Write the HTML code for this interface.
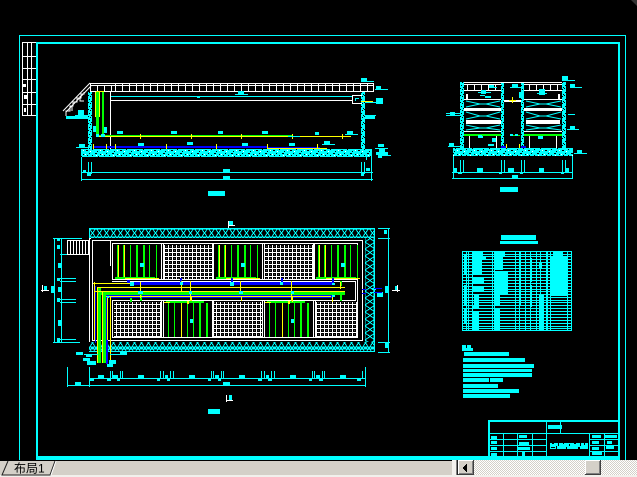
<!DOCTYPE html>
<html><head><meta charset="utf-8"><style>
html,body{margin:0;padding:0;background:#000;width:637px;height:477px;overflow:hidden}
svg{display:block;position:absolute;left:0;top:0;overflow:hidden}
text{font-family:"Liberation Sans","Noto Sans CJK SC","WenQuanYi Zen Hei",sans-serif}
</style></head><body>
<svg width="637" height="477" viewBox="0 0 637 477" xmlns="http://www.w3.org/2000/svg" shape-rendering="crispEdges">
<defs>
<pattern id="con" width="17" height="8" patternUnits="userSpaceOnUse" patternTransform="translate(0 149)">
<rect width="17" height="8" fill="#0ff"/>
<path d="M1 1h2v1h-2zM7 0h1v1h-1zM12 2h1v1h-1zM4 4h1v1h-1zM10 4h2v1h-2zM15 5h1v1h-1zM2 6h1v1h-1zM7 6h1v1h-1zM13 7h1v1h-1z" fill="#000"/>
<path d="M5 2h1v1h-1zM15 1h1v1h-1zM0 5h1v1h-1zM11 6h1v1h-1z" fill="#fff"/>
</pattern>
<pattern id="wall" width="4" height="7" patternUnits="userSpaceOnUse">
<rect width="4" height="7" fill="#0ff"/>
<path d="M1 1h1v1h-1zM3 3h1v1h-1zM0 4h1v1h-1zM2 5h1v1h-1z" fill="#000"/>
</pattern>
<pattern id="hatch" width="7" height="10" patternUnits="userSpaceOnUse" patternTransform="translate(89 228)">
<path d="M0 0L3.5 5L0 10M7 0L3.5 5L7 10M2 0L5 0M2 10L5 10M0 1L7 1M1 9H6" fill="none" stroke="#0ff" stroke-width="1"/>
</pattern>
<pattern id="hatchv" width="10" height="7" patternUnits="userSpaceOnUse" patternTransform="translate(365 228)">
<path d="M0 0L5 3.5L10 0M0 7L5 3.5L10 7M0 0V7M9 0V7" fill="none" stroke="#0ff" stroke-width="1"/>
</pattern>
<pattern id="grid" width="4" height="4" patternUnits="userSpaceOnUse">
<rect width="4" height="4" fill="#000"/>
<path d="M0 0h4v1h-4zM0 0h1v4h-1z" fill="#fff"/>
<path d="M2 2h1v1h-1z" fill="#444"/>
</pattern>
<pattern id="dither" width="2" height="2" patternUnits="userSpaceOnUse">
<rect width="2" height="2" fill="#fff"/>
<path d="M0 0h1v1h-1zM1 1h1v1h-1z" fill="#d4d0c8"/>
</pattern>
<pattern id="rail" width="7" height="9" patternUnits="userSpaceOnUse" patternTransform="translate(115 83)">
<path d="M0 2h7v1h-7zM0 0h1v9h-1zM0 8h7v1h-7z" fill="#fff"/>
</pattern>
<g id="rt">
<path d="M4 2h1v34h-1zM10 2h1v34h-1zM17 2h1v34h-1zM23 2h2v34h-2zM30 2h2v34h-2zM36 2h1v34h-1zM43 2h1v34h-1z" fill="#0f0"/>
<path d="M5 2h1v34h-1zM11 2h1v34h-1z" fill="#ff0"/>
<path d="M2 34h40v2h-40z" fill="#0f0"/>
<path d="M12 35h34v1h-34z" fill="#ff0"/>
<path d="M27 20h4v4h-4z" fill="#0ff"/>
</g>
<g id="rb">
<path d="M5 2h1v34h-1zM11 2h1v34h-1zM18 2h1v34h-1zM24 2h1v34h-1zM30 2h1v34h-1zM36 2h2v34h-2zM43 2h2v34h-2z" fill="#0f0"/>
<path d="M18 2h1v34h-1z" fill="#ff0"/>
<path d="M3 0h38v2h-38z" fill="#0f0"/>
<path d="M1 1h6v1h-6zM24 0h2v3h-2z" fill="#ff0"/>
<path d="M27 18h3v4h-3z" fill="#0ff"/>
</g>
</defs>

<!-- drawing frames -->
<path d="M19 35h607v1h-607zM19 35h1v425h-1zM625 35h1v425h-1z" fill="#0ff"/>
<path d="M36 42h584v2h-582v412h580v-412h2v416h-584z" fill="#0ff"/>

<!-- revision strip -->
<path d="M22 42h14v1h-14zM22 56h14v1h-14zM22 68h14v1h-14zM22 79h14v1h-14zM22 92h14v1h-14zM22 104h14v1h-14zM22 115h14v1h-14zM22 42h1v74h-1zM27 42h1v74h-1zM31 42h1v74h-1z" fill="#fff"/>
<path d="M23 84h3v3h-3zM24 95h3v4h-3zM24 108h2v4h-2z" fill="#fff"/>

<!-- SECTION 1 -->
<rect x="115" y="83" width="259" height="9" fill="url(#rail)"/>
<path d="M90 83h284v1h-284zM90 85h284v1h-284zM90 91h284v1h-284zM373 83h1v9h-1zM90 83h1v9h-1zM97 85h1v7h-1zM104 85h1v7h-1zM111 85h1v7h-1z" fill="#fff"/>
<g fill="none" stroke="#fff" stroke-width="1" shape-rendering="auto">
<path d="M90 83L63 111M91 86L66 112"/>
<path d="M66 116V111H70V106H73V102H77V98H81V94H84V92M72 106V111M80 96V101H84"/>
</g>
<rect x="88" y="92" width="4" height="58" fill="url(#wall)"/>
<rect x="361" y="92" width="4" height="58" fill="url(#wall)"/>
<path d="M110 92h1v58h-1zM110 100h242v1h-242zM352 95h10v1h-10zM352 95h1v9h-1zM352 103h10v1h-10z" fill="#fff"/>
<path d="M111 96h241v1h-241zM197 96h3v2h-3zM355 98h4v1h-4zM355 98h1v3h-1z" fill="#0ff"/>
<path d="M365 101h8v2h-8z" fill="#00f"/><path d="M361 101h12v1h-12z" fill="#ff0"/>
<path d="M96 92h3v45h-3zM102 92h2v45h-2z" fill="#0f0"/>
<path d="M95 92h1v25h-1zM99 92h1v25h-1zM96 91h8v1h-8z" fill="#ff0"/>
<path d="M97 135h196v1h-196z" fill="#0f0"/>
<path d="M97 136h147v1h-147zM244 136h107v1h-107z" fill="#ff0"/>
<path d="M94 146h174v2h-174zM268 147h52v1h-52z" fill="#00f"/>
<path d="M267 148h60v1h-60zM93 144h1v6h-1zM106 144h1v6h-1zM115 144h1v6h-1zM166 144h1v6h-1zM216 144h1v6h-1zM267 144h1v6h-1zM317 144h1v6h-1zM140 134h1v5h-1zM191 134h1v5h-1zM241 134h1v5h-1zM292 134h1v5h-1zM342 134h1v5h-1z" fill="#ff0"/>
<rect x="81" y="149" width="291" height="8" fill="url(#con)"/>
<path d="M366 157h1v3h-1zM81 157h1v24h-1zM371 157h1v24h-1zM81 172h292v1h-292zM81 179h292v1h-292zM88 162h1v12h-1zM91 162h1v12h-1zM361 162h1v12h-1zM364 162h1v12h-1zM208 191h17v5h-17z" fill="#0ff"/>
<path fill="#0ff" d="M117 131h6v3h-6zM171 131h6v3h-6zM218 131h5v3h-5zM262 131h6v3h-6zM315 132h4v3h-4zM347 131h6v4h-6zM345 134h13v1h-13zM138 143h6v3h-6zM187 142h6v3h-6zM242 143h6v3h-6zM289 143h6v3h-6zM324 141h6v4h-6zM322 144h13v1h-13zM79 144h6v4h-6zM76 147h12v1h-12zM238 91h6v4h-6zM235 94h13v1h-13zM361 78h6v4h-6zM361 81h13v1h-13zM376 86h5v4h-5zM375 89h13v1h-13zM376 98h7v6h-7zM365 102h17v1h-17zM78 110h6v6h-6zM75 115h13v1h-13zM365 115h11v1h-11zM66 116h22v3h-22zM365 116h10v3h-10zM378 144h6v3h-6zM379 149h6v3h-6zM376 152h12v3h-12zM375 148h13v1h-13zM380 155h11v1h-11zM378 155h4v3h-4zM223 169h7v3h-7zM223 176h7v3h-7zM83 170h3v3h-3zM87 173h4v3h-4zM366 168h4v3h-4zM361 173h3v3h-3zM93 126h3v6h-3zM104 127h3v6h-3zM96 134h3v3h-3zM101 134h4v3h-4zM288 136h12v1h-12z"/>

<!-- SECTION 2 -->
<rect x="460" y="82" width="4" height="68" fill="url(#wall)"/>
<rect x="501" y="82" width="3" height="66" fill="url(#wall)"/>
<rect x="521" y="82" width="3" height="66" fill="url(#wall)"/>
<rect x="562" y="82" width="4" height="68" fill="url(#wall)"/>
<path d="M464 82h98v1h-98zM464 84h37v1h-37zM524 84h38v1h-38zM464 90h37v1h-37zM524 90h38v1h-38zM467 84h1v6h-1zM474 84h1v6h-1zM481 84h1v6h-1zM488 84h1v6h-1zM495 84h1v6h-1zM529 84h1v6h-1zM536 84h1v6h-1zM543 84h1v6h-1zM550 84h1v6h-1zM557 84h1v6h-1zM504 100h17v2h-17zM464 99h37v1h-37zM524 99h38v1h-38zM466 94h2v5h-2zM558 94h2v5h-2zM464 108h37v3h-37zM524 108h38v3h-38zM466 120h35v4h-35zM526 120h34v4h-34zM464 131h37v1h-37zM524 131h38v1h-38zM469 135h1v14h-1zM496 135h1v14h-1zM529 135h1v14h-1zM556 135h1v14h-1z" fill="#fff"/>
<g fill="none" stroke="#0ff" stroke-width="1" shape-rendering="auto">
<path d="M466 101L480 104H486L500 101M466 107L480 104M486 104L500 107"/>
<path d="M466 112L480 116H486L500 112M466 119L480 116M486 116L500 119"/>
<path d="M466 125L480 128H486L500 125M466 130L480 128M486 128L500 130"/>
<path d="M526 101L540 104H546L561 101M526 107L540 104M546 104L561 107"/>
<path d="M526 112L540 116H546L561 112M526 119L540 116M546 116L561 119"/>
<path d="M526 125L540 128H546L561 125M526 130L540 128M546 128L561 130"/>
</g>
<path d="M464 134h37v2h-37zM524 134h38v2h-38zM511 135h9v1h-9z" fill="#0f0"/>
<path d="M512 97h1v6h-1zM509 100h7v1h-7zM506 144h1v6h-1zM519 144h1v6h-1z" fill="#ff0"/>
<path d="M501 146h5v3h-5zM521 146h5v3h-5z" fill="#00f"/>
<rect x="453" y="148" width="120" height="8" fill="url(#con)"/>
<path fill="#0ff" d="M453 156h1v23h-1zM572 156h1v23h-1zM452 172h121v1h-121zM452 178h121v1h-121zM460 160h1v12h-1zM463 160h1v12h-1zM501 160h1v12h-1zM504 160h1v12h-1zM521 160h1v12h-1zM524 160h1v12h-1zM562 160h1v12h-1zM565 160h1v12h-1zM477 168h6v4h-6zM508 168h6v4h-6zM539 168h5v4h-5zM454 168h3v4h-3zM566 168h3v4h-3zM458 172h4v2h-4zM499 172h3v2h-3zM520 172h3v2h-3zM561 172h3v2h-3zM512 175h6v3h-6zM500 187h18v5h-18zM489 85h5v3h-5zM491 87h6v1h-6zM481 90h5v4h-5zM478 92h13v1h-13zM485 96h6v2h-6zM480 95h5v1h-5zM512 84h6v3h-6zM510 87h14v1h-14zM519 92h5v6h-5zM539 89h6v6h-6zM537 93h10v1h-10zM478 135h4v2h-4zM492 138h4v4h-4zM478 136h5v2h-5zM510 134h3v2h-3zM515 134h3v2h-3zM538 136h5v3h-5zM488 144h6v2h-6zM450 112h5v3h-5zM446 113h14v1h-14zM446 115h14v1h-14zM568 114h7v1h-7zM570 126h5v3h-5zM567 129h12v1h-12zM449 143h5v3h-5zM448 146h13v1h-13zM562 76h6v4h-6zM562 80h13v1h-13zM570 84h5v4h-5zM570 87h12v1h-12zM577 150h5v4h-5zM574 153h13v1h-13z"/>

<!-- PLAN -->
<rect x="89" y="228" width="286" height="10" fill="url(#hatch)"/>
<rect x="89" y="342" width="286" height="10" fill="url(#hatch)"/>
<rect x="365" y="238" width="10" height="104" fill="url(#hatchv)"/>
<path d="M89 228h286v1h-286zM89 351h286v1h-286zM374 228h1v124h-1zM89 228h1v26h-1z" fill="#0ff"/>
<path fill="#fff" d="M92 240h1v100h-1zM92 240h271v1h-271zM362 240h1v101h-1zM92 340h271v1h-271zM89 238h1v104h-1zM89 238h2v1h-2zM110 240h1v26h-1zM92 240h18v1h-18zM112 243h246v1h-246zM357 243h1v95h-1zM112 337h246v1h-246zM112 243h1v36h-1zM112 279h246v1h-246zM112 300h244v1h-244zM112 300h1v38h-1zM355 281h1v20h-1zM112 281h244v1h-244zM161 244h1v35h-1zM163 244h1v35h-1zM212 244h1v35h-1zM213 244h1v35h-1zM262 244h1v35h-1zM264 244h1v35h-1zM313 244h1v35h-1zM314 244h1v35h-1zM161 301h1v36h-1zM163 301h1v36h-1zM212 301h1v36h-1zM213 301h1v36h-1zM262 301h1v36h-1zM264 301h1v36h-1zM313 301h1v36h-1zM315 301h1v36h-1z"/>
<rect x="164" y="245" width="48" height="34" fill="url(#grid)"/>
<rect x="265" y="245" width="48" height="34" fill="url(#grid)"/>
<rect x="114" y="302" width="47" height="35" fill="url(#grid)"/>
<rect x="214" y="302" width="48" height="35" fill="url(#grid)"/>
<rect x="316" y="302" width="41" height="35" fill="url(#grid)"/>
<use href="#rt" x="113" y="243"/>
<use href="#rt" x="214" y="243"/>
<use href="#rt" x="314" y="243"/>
<use href="#rb" x="163" y="301"/>
<use href="#rb" x="264" y="301"/>
<!-- stairs -->
<path fill="#fff" d="M67 240h22v1h-22zM67 254h22v1h-22zM67 240h1v14h-1zM70 240h1v14h-1zM73 240h1v14h-1zM76 240h1v14h-1zM79 240h1v14h-1zM82 240h1v14h-1zM85 240h1v14h-1zM88 240h1v14h-1z"/>
<!-- pipes -->
<path fill="#00f" d="M130 282h203v3h-203zM106 295h227v3h-227zM95 286h1v57h-1zM106 296h2v68h-2zM127 280h3v4h-3zM180 278h2v5h-2zM231 278h2v5h-2zM281 278h2v5h-2zM332 278h2v5h-2zM242 295h2v3h-2zM292 295h2v3h-2z"/>
<path fill="#0f0" d="M100 292h245v3h-245zM98 288h3v75h-3zM103 291h3v72h-3zM340 281h2v5h-2zM340 291h2v10h-2zM140 294h2v7h-2zM130 298h2v4h-2z"/>
<path fill="#ff0" d="M93 283h38v1h-38zM97 287h248v1h-248zM95 291h250v1h-250zM106 296h225v1h-225zM94 282h1v58h-1zM97 288h1v75h-1zM102 291h1v72h-1zM107 296h1v44h-1zM110 297h1v66h-1zM181 281h1v10h-1zM190 281h1v20h-1zM240 281h1v10h-1zM241 296h1v5h-1zM191 296h1v5h-1zM140 282h1v10h-1zM292 296h1v6h-1zM291 281h1v20h-1zM332 296h1v6h-1zM340 282h1v7h-1zM291 296h1v5h-1zM140 295h1v3h-1z"/>
<path fill="#0ff" d="M130 282h4v4h-4zM180 282h3v3h-3zM230 282h4v4h-4zM280 282h3v3h-3zM332 283h3v2h-3zM138 291h5v3h-5zM189 291h3v3h-3zM239 291h4v3h-4zM291 291h3v3h-3zM332 295h3v2h-3zM107 296h2v2h-2z"/>
<!-- plan labels -->
<path fill="#fff" d="M228 221h1v7h-1zM228 225h7v1h-7zM226 395h1v7h-1zM226 400h7v1h-7zM42 285h1v7h-1zM41 290h8v1h-8zM397 285h1v7h-1zM392 290h8v1h-8z"/>
<path fill="#0ff" d="M229 221h4v4h-4zM229 395h3v5h-3zM44 286h3v4h-3zM395 286h2v4h-2zM208 409h12v5h-12zM53 238h29v1h-29zM53 342h27v1h-27zM54 238h1v104h-1zM61 238h1v104h-1zM60 278h16v1h-16zM60 281h16v1h-16zM60 299h16v1h-16zM60 302h16v1h-16zM60 339h16v1h-16zM60 254h7v1h-7zM57 238h3v3h-3zM57 245h3v4h-3zM58 263h4v5h-4zM57 278h3v3h-3zM58 287h4v5h-4zM57 298h3v4h-3zM58 320h4v6h-4zM57 338h3v4h-3zM51 286h3v7h-3zM378 228h12v1h-12zM378 238h12v1h-12zM378 342h12v1h-12zM378 352h12v1h-12zM388 228h1v124h-1zM384 230h3v4h-3zM385 286h4v7h-4zM385 343h4v5h-4zM377 292h6v5h-6zM76 352h7v3h-7zM86 354h6v3h-6zM84 354h14v1h-14zM83 358h7v3h-7zM87 361h9v4h-9zM109 360h7v4h-7zM107 364h6v3h-6zM120 352h7v3h-7zM110 354h14v1h-14zM67 367h1v20h-1zM89 367h1v20h-1zM365 367h1v20h-1zM67 385h299v1h-299zM90 378h275v1h-275zM75 382h6v3h-6zM223 382h7v3h-7zM98 375h6v3h-6zM113 375h5v3h-5zM138 375h6v3h-6zM165 375h3v3h-3zM189 375h6v3h-6zM215 375h4v3h-4zM239 375h6v3h-6zM266 375h3v3h-3zM290 375h6v3h-6zM316 375h4v3h-4zM340 375h6v3h-6zM90 378h4v3h-4zM107 378h4v3h-4zM117 378h3v3h-3zM157 378h3v3h-3zM167 378h3v3h-3zM208 378h3v3h-3zM218 378h3v3h-3zM258 378h4v3h-4zM268 378h4v3h-4zM309 378h3v3h-3zM319 378h4v3h-4zM357 378h4v3h-4zM110 371h1v8h-1zM112 371h1v8h-1zM120 371h1v8h-1zM122 371h1v8h-1zM160 371h1v8h-1zM163 371h1v8h-1zM170 371h1v8h-1zM173 371h1v8h-1zM211 371h1v8h-1zM213 371h1v8h-1zM221 371h1v8h-1zM223 371h1v8h-1zM261 371h1v8h-1zM264 371h1v8h-1zM271 371h1v8h-1zM274 371h1v8h-1zM312 371h1v8h-1zM314 371h1v8h-1zM322 371h1v8h-1zM324 371h1v8h-1zM362 371h1v8h-1zM372 288h4v2h-4zM370 292h12v1h-12z"/>
<path fill="#00f" d="M362 289h4v1h-4zM362 293h4v1h-4zM374 288h8v1h-8zM374 292h8v1h-8z"/>

<!-- TABLE -->
<path fill="#0ff" d="M501 235h35v5h-35zM500 241h38v3h-38zM462 251h110v1h-110zM462 330h110v1h-110zM462 251h1v80h-1zM571 251h1v80h-1z"/>
<path fill="#0ff" d="M462 254h110v1h-110zM462 256h110v1h-110zM462 259h110v1h-110zM462 262h110v1h-110zM462 265h110v1h-110zM462 268h110v1h-110zM462 271h110v1h-110zM462 274h110v1h-110zM462 277h110v1h-110zM462 280h110v1h-110zM462 283h110v1h-110zM462 286h110v1h-110zM462 289h110v1h-110zM462 291h110v1h-110zM462 294h110v1h-110zM462 297h110v1h-110zM462 300h110v1h-110zM462 302h110v1h-110zM462 305h110v1h-110zM462 308h110v1h-110zM462 311h110v1h-110zM462 314h110v1h-110zM462 317h110v1h-110zM462 320h110v1h-110zM462 323h110v1h-110zM462 326h110v1h-110zM462 328h110v1h-110z"/>
<path fill="#0ff" d="M466 251h1v80h-1zM468 251h1v80h-1zM472 251h1v80h-1zM492 251h1v80h-1zM494 251h1v80h-1zM515 251h1v80h-1zM519 251h1v80h-1zM525 251h1v80h-1zM530 251h1v80h-1zM536 251h1v80h-1zM540 251h1v80h-1zM546 251h2v80h-2zM550 251h1v80h-1zM567 251h1v80h-1z"/>
<path fill="#0ff" d="M472 252h11v4h-11zM472 256h14v3h-14zM472 259h10v10h-10zM473 269h9v5h-9zM472 277h12v7h-12zM473 287h11v4h-11zM474 295h5v10h-5zM472 305h7v3h-7zM472 311h7v14h-7zM472 324h7v7h-7zM494 252h11v4h-11zM494 256h9v14h-9zM494 272h14v18h-14zM494 290h14v5h-14zM494 295h6v10h-6zM494 308h6v17h-6zM494 324h6v7h-6zM553 252h10v4h-10zM551 256h17v15h-17zM551 271h17v15h-17zM551 286h16v10h-16zM539 262h3v6h-3zM539 295h5v10h-5zM539 305h5v8h-5zM539 313h5v12h-5zM539 325h5v6h-5zM519 252h2v28h-2zM519 280h2v26h-2zM530 258h2v24h-2zM530 285h2v22h-2zM464 255h2v20h-2zM464 285h3v20h-3zM464 308h3v16h-3z"/>

<!-- NOTES -->
<path fill="#0ff" d="M462 345h4v6h-4zM467 345h4v6h-4zM462 348h11v3h-11zM464 352h45v4h-45zM463 358h62v4h-62zM463 364h71v4h-71zM463 369h69v3h-69zM463 373h69v4h-69zM463 378h26v4h-26zM490 378h13v4h-13zM463 384h35v4h-35zM463 389h56v4h-56zM463 394h47v4h-47z"/>

<!-- TITLE BLOCK -->
<path fill="#0ff" d="M488 420h130v2h-130zM488 420h2v36h-2zM490 433h128v1h-128zM546 420h1v36h-1zM560 420h1v13h-1zM548 425h14v4h-14zM490 439h56v1h-56zM490 445h56v1h-56zM490 451h56v1h-56zM589 439h29v1h-29zM589 445h29v1h-29zM589 451h29v1h-29zM503 433h1v23h-1zM517 433h1v23h-1zM532 433h1v23h-1zM589 433h1v23h-1zM604 433h1v23h-1zM491 436h6v3h-6zM491 441h6v3h-6zM491 447h6v3h-6zM491 453h6v3h-6zM519 435h8v3h-8zM519 442h10v3h-10zM518 447h12v3h-12zM522 452h3v4h-3zM592 435h9v3h-9zM592 441h7v3h-7zM592 447h7v3h-7zM592 451h10v4h-10zM605 435h12v3h-12zM607 441h5v3h-5zM606 446h8v3h-8z"/>
<path fill="#0ff" d="M550 443h38v6h-38z"/>
<path fill="#000" d="M552 442h2v2h-2zM558 443h1v3h-1zM563 442h1v2h-1zM569 444h1v2h-1zM574 442h2v2h-2zM580 443h1v3h-1zM584 442h1v3h-1zM551 447h4v1h-4zM556 446h1v3h-1zM566 447h1v2h-1zM578 447h2v2h-2z"/>

<!-- corner -->
<polygon points="631,0 637,0 637,6" fill="#333" shape-rendering="auto"/>

<!-- bottom bar -->
<rect x="0" y="461" width="637" height="14" fill="#d4d0c8"/>
<rect x="0" y="475" width="637" height="2" fill="#f2f0ec"/>
<polygon points="8,461 55,461 50,475 2,475" fill="#d4d0c8" shape-rendering="auto"/>
<path d="M8 461L2 475H50L55 461" fill="none" stroke="#222" stroke-width="1" shape-rendering="auto"/>
<path d="M56 461L51 475" fill="none" stroke="#fff" stroke-width="1" shape-rendering="auto"/>
<text x="14" y="472.5" font-size="12" fill="#000" shape-rendering="auto">布局1</text>
<rect x="452" y="460" width="6" height="15" fill="#f4f2ee"/>
<rect x="456" y="460" width="1" height="15" fill="#808080"/>
<rect x="457" y="460" width="1" height="15" fill="#222"/>
<rect x="474" y="460" width="163" height="15" fill="url(#dither)"/>
<rect x="458" y="460" width="16" height="15" fill="#d4d0c8"/>
<path d="M458 460h16v1h-16zM458 460h1v15h-1z" fill="#fff"/>
<path d="M473 460h1v15h-1zM458 474h16v1h-16z" fill="#404040"/>
<path d="M472 461h1v13h-1zM459 473h13v1h-13z" fill="#808080"/>
<path d="M466 464h1v8h-1zM465 465h1v6h-1zM464 466h1v4h-1zM463 467h1v2h-1z" fill="#000"/>
<rect x="585" y="460" width="16" height="15" fill="#d4d0c8"/>
<path d="M585 460h16v1h-16zM585 460h1v15h-1z" fill="#fff"/>
<path d="M600 460h1v15h-1zM585 474h16v1h-16z" fill="#404040"/>
<path d="M599 461h1v13h-1zM586 473h13v1h-13z" fill="#808080"/>
</svg>
</body></html>
